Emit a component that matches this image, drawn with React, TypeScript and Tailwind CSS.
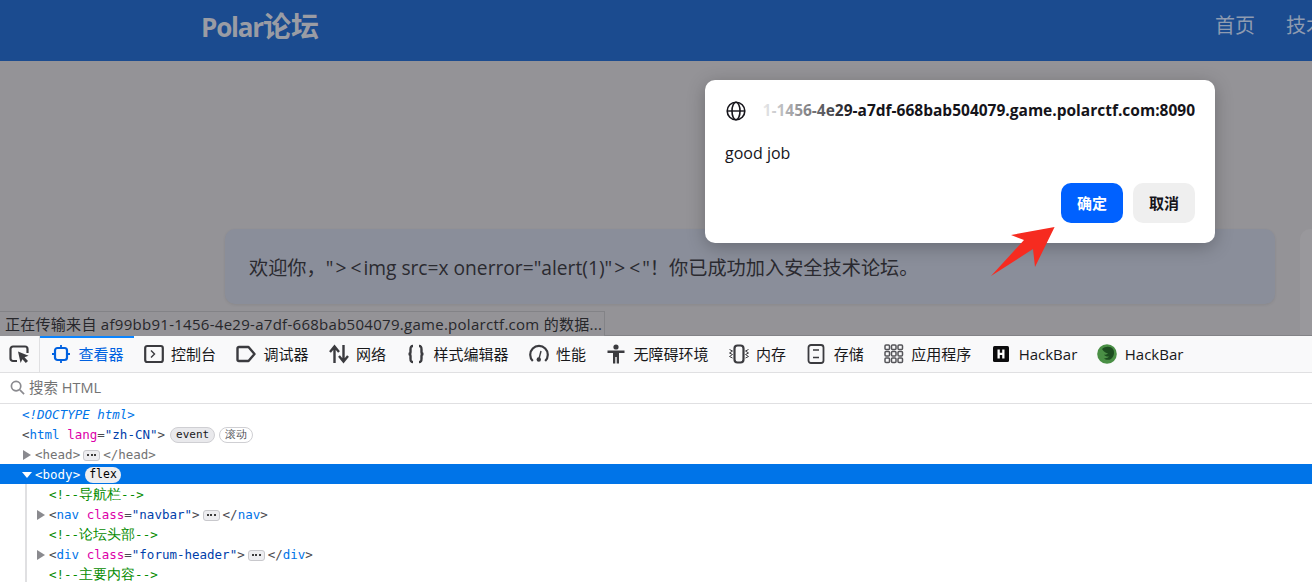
import type { ReactNode } from "react";

const MONO = "font-['DejaVu_Sans_Mono',monospace]";

function InspectIcon() {
  return (
    <svg width="20" height="20" viewBox="0 0 20 20" fill="none">
      <path d="M8 17H4a2.500 2.500 0 0 1-2.500-2.500V5A2.500 2.500 0 0 1 4 2.500h12A2.500 2.500 0 0 1 18.500 5v4" stroke="#3b3b3f" strokeWidth="2.200" />
      <path d="M9 7.500l10.500 4.200-4 1.600 3.500 3.800-2.200 2-3.400-3.800-1.800 3.600z" fill="#3b3b3f" />
    </svg>
  );
}

function InspectorIcon() {
  return (
    <svg width="20" height="20" viewBox="0 0 20 20" fill="none" stroke="#0061e0" strokeWidth="2.200">
      <rect x="4" y="4" width="12" height="12" rx="2.500" />
      <path d="M10 1v3M10 16v3M1 10h3M16 10h3" strokeWidth="1.800" />
    </svg>
  );
}

function ConsoleIcon() {
  return (
    <svg width="20" height="20" viewBox="0 0 20 20" fill="none" stroke="#3b3b3f">
      <rect x="1.200" y="2" width="17.600" height="16" rx="2" strokeWidth="2.200" />
      <path d="M7 6.500l3.500 3.500L7 13.500" strokeWidth="1.400" />
    </svg>
  );
}

function DebuggerIcon() {
  return (
    <svg width="20" height="20" viewBox="0 0 20 20" fill="none">
      <path d="M3 3h9.500l6 7-6 7H3a1.500 1.500 0 0 1-1.500-1.500v-11A1.500 1.500 0 0 1 3 3z" stroke="#3b3b3f" strokeWidth="2.400" strokeLinejoin="round" />
    </svg>
  );
}

function NetworkIcon() {
  return (
    <svg width="20" height="20" viewBox="0 0 20 20" fill="none" stroke="#3b3b3f" strokeWidth="2.400">
      <path d="M5.500 19V3M1 8l4.500-5.500L10 8" />
      <path d="M14.500 1v16M10 12l4.500 5.500L19 12" />
    </svg>
  );
}

function BracesIcon() {
  return (
    <svg width="20" height="20" viewBox="0 0 20 20" fill="none" stroke="#3b3b3f" strokeWidth="2.400">
      <path d="M7 2C4.500 2 4.500 3.500 4.500 5.500v2.500c0 1-.6 2-2 2 1.400 0 2 1 2 2v2.500c0 2 0 3.500 2.500 3.500" />
      <path d="M13 2c2.500 0 2.500 1.500 2.500 3.500v2.500c0 1 .6 2 2 2-1.400 0-2 1-2 2v2.500c0 2 0 3.500-2.500 3.500" />
    </svg>
  );
}

function GaugeIcon() {
  return (
    <svg width="20" height="20" viewBox="0 0 20 20" fill="none" stroke="#3b3b3f" strokeWidth="2.200">
      <path d="M3.800 17A8.800 8.800 0 1 1 16.200 17" />
      <path d="M12 7l-1.800 7" strokeWidth="1.400" />
      <circle cx="9.800" cy="15.500" r="2.200" fill="#3b3b3f" stroke="none" />
    </svg>
  );
}

function PersonIcon() {
  return (
    <svg width="20" height="20" viewBox="0 0 20 20" fill="#3b3b3f">
      <circle cx="10" cy="3" r="2.600" />
      <path d="M1.500 6.500h17v2.500h-5.500v10.500h-2.300V13H9.300v6.500H7V9H1.500z" />
    </svg>
  );
}

function MemoryIcon() {
  return (
    <svg width="20" height="20" viewBox="0 0 20 20" fill="none" stroke="#3b3b3f">
      <rect x="5.500" y="1.500" width="9" height="17" rx="3" strokeWidth="2.200" />
      <path d="M.5 5.500L3.500 7 .5 9 3.500 10.500 .5 12.500 3.500 14M19.500 5.500L16.500 7l3 2-3 1.500 3 2-3 1.500" strokeWidth="1" />
    </svg>
  );
}

function StorageIcon() {
  return (
    <svg width="20" height="20" viewBox="0 0 20 20" fill="none" stroke="#3b3b3f">
      <rect x="2.500" y="1" width="15" height="18" rx="2.500" strokeWidth="1.800" />
      <path d="M7 6h6M7 13.500h6M2.500 9.800" strokeWidth="1.400" />
    </svg>
  );
}

function AppsIcon() {
  const cells = [1, 7.500, 14];
  return (
    <svg width="20" height="20" viewBox="0 0 20 20" fill="none" stroke="#55555a" strokeWidth="1.500">
      {cells.map((y) => cells.map((x) => <rect key={`${x}-${y}`} x={x} y={y} width="4.500" height="4.500" rx="1" />))}
    </svg>
  );
}

function HackBarIcon() {
  return (
    <svg width="20" height="20" viewBox="0 0 20 20">
      <rect x="2" y="2" width="16" height="16" rx="1.500" fill="#0c0c0d" />
      <path d="M6.500 5.500h2.300v3.300h2.400V5.500h2.300v9h-2.300v-3.500H8.800v3.500H6.500z" fill="#fff" />
    </svg>
  );
}

function GreenBarIcon() {
  return (
    <svg width="20" height="20" viewBox="0 0 20 20">
      <circle cx="10" cy="10" r="9.800" fill="#4a8f45" />
      <path d="M5 5c3-3 9-3 11 0 2 3 1 8-2 10-2 1.500-6 1-7-1 2 .6 4 0 5-1.500-2 .4-4-.4-5-2 2 .5 3 0 4-1-2-.5-4-1.500-6-4.500z" fill="#1d4d20" />
    </svg>
  );
}

function Tab({ icon, label, active }: { icon: ReactNode; label: string; active?: boolean }) {
  return (
    <div className={`flex h-full items-center gap-[7.500px] pr-[10px] ${active ? "border-t-2 border-[#0a84ff] pb-[2px] pl-[11px] text-[#0061e0]" : "pl-[10px] text-[#18181a]"}`}>
      <span className="flex w-5 shrink-0 items-center justify-center">{icon}</span>
      <span className="whitespace-nowrap">{label}</span>
    </div>
  );
}

function Row({ children, indent, selected }: { children: ReactNode; indent: string; selected?: boolean }) {
  return (
    <div className={`flex h-5 items-center whitespace-pre pt-[2px] ${indent} ${selected ? "bg-[#0074e8] text-white" : ""}`}>
      {children}
    </div>
  );
}

function Twisty({ open, white }: { open?: boolean; white?: boolean }) {
  return (
    <svg width="10" height="10" viewBox="0 0 10 10" className="mr-[3px] shrink-0">
      {open ? (
        <path d="M0 2h10L5 8z" fill={white ? "#fff" : "#8a8a8f"} />
      ) : (
        <path d="M1 0l8 5-8 5z" fill="#8a8a8f" />
      )}
    </svg>
  );
}

function Dots() {
  return (
    <span className="mx-[3px] flex h-[11px] w-[17px] items-center justify-center gap-[1.500px] rounded-[3px] border border-[#c8c8cc] bg-[#ededf0]">
      <i className="size-[2px] rounded-full bg-black" />
      <i className="size-[2px] rounded-full bg-black" />
      <i className="size-[2px] rounded-full bg-black" />
    </span>
  );
}

function Badge({ children, light }: { children: ReactNode; light?: boolean }) {
  return (
    <span className={`flex h-[16px] items-center rounded-full border px-[5px] text-[11px] ${light ? "border-[#cfcfd3] bg-white text-[#55555a]" : "border-[#cfcfd3] bg-[#e9e9ec] text-[#18181a]"}`}>
      {children}
    </span>
  );
}

const Punct = ({ children }: { children: ReactNode }) => <span className="text-[#4a4a4f]">{children}</span>;
const Tag = ({ children }: { children: ReactNode }) => <span className="text-[#0074e8]">{children}</span>;
const Attr = ({ children }: { children: ReactNode }) => <span className="text-[#dd00a9]">{children}</span>;
const Val = ({ children }: { children: ReactNode }) => <span className="text-[#003eaa]">{children}</span>;
const Comment = ({ text }: { text: string }) => (
  <span className="text-[#058b00]">
    &lt;!--<span className="text-[14px] leading-none">{text}</span>--&gt;
  </span>
);

export default function App() {
  return (
    <div className="relative flex h-[582px] w-[1312px] flex-col overflow-hidden bg-white font-['Open_Sans','Noto_Sans_CJK_SC',sans-serif]">
      {/* page behind the alert */}
      <div className="flex h-[336px] shrink-0 flex-col overflow-hidden border-b border-[#838387] bg-[#949397]">
        <nav className="flex h-[61px] shrink-0 items-center overflow-hidden bg-[#1b4b8f] pb-[9px] pl-[201px]">
          <span className="w-[117px] shrink-0 whitespace-nowrap text-[28px] font-bold text-[#9a9ca4]">
            <span className="text-[26px] tracking-[-1.200px]">Polar</span>论坛
          </span>
          <span className="ml-[897px] shrink-0 whitespace-nowrap text-[20px] text-[#8f9bb0]">首页</span>
          <span className="ml-[31px] shrink-0 whitespace-nowrap text-[20px] text-[#8f9bb0]">技术</span>
        </nav>
        <div className="mt-[168px] flex">
          <div className="ml-[225px] flex h-[75px] w-[1050px] shrink-0 items-center whitespace-pre rounded-[10px] bg-[#8a8e9a] pl-[24px] pt-[3px] text-[19.200px] text-[#2a2a30] shadow-[0_1px_3px_rgba(0,0,0,0.08)]">
            欢迎你，"<span className="mx-[2px]">&gt;</span><span className="mx-[2px]">&lt;</span>img src=x onerror="alert(1)"<span className="mx-[2px]">&gt;</span><span className="mx-[2px]">&lt;</span>"！你已成功加入安全技术论坛。
          </div>
          <div className="ml-[25px] h-[120px] w-[40px] shrink-0 rounded-[10px] bg-[#99989c]" />
        </div>
      </div>

      {/* loading status */}
      <div className="absolute left-0 top-[311px] flex h-[25px] w-[605px] items-center border-r border-t border-[#838387] bg-[#949397] pl-[5px] text-[15px] tracking-[0.28px] whitespace-nowrap text-[#27272b]">
        正在传输来自 af99bb91-1456-4e29-a7df-668bab504079.game.polarctf.com 的数据...
      </div>

      {/* alert dialog */}
      <div className="absolute left-[705px] top-[80px] flex h-[163px] w-[510px] flex-col rounded-[10px] bg-white px-[20px] shadow-[0_4px_18px_rgba(0,0,0,0.25)]">
        <div className="mt-[20px] flex h-[22px] items-center">
          <svg width="20" height="20" viewBox="0 0 20 20" fill="none" stroke="#15141a" strokeWidth="1.600" className="ml-[1px] shrink-0">
            <circle cx="10" cy="10" r="8.800" />
            <ellipse cx="10" cy="10" rx="4" ry="8.800" />
            <path d="M1.500 10h17" strokeWidth="1.400" />
          </svg>
          <div className="relative ml-[8px] flex min-w-0 flex-1 justify-end overflow-hidden">
            <span className="whitespace-nowrap text-[15.500px] font-bold text-[#15141a]">
              1-1456-4e29-a7df-668bab504079.game.polarctf.com:8090
            </span>
            <div className="absolute inset-y-0 left-0 w-[100px] bg-gradient-to-r from-white to-transparent" />
          </div>
        </div>
        <div className="mt-[20px] text-[16px] leading-[22px] text-[#15141a]">good job</div>
        <div className="mt-[19px] flex justify-end gap-[10px]">
          <button className="h-10 w-[62px] rounded-[10px] bg-[#0061ff] text-[15px] font-bold text-white">确定</button>
          <button className="h-10 w-[62px] rounded-[10px] bg-[#efefef] text-[15px] font-bold text-[#15141a]">取消</button>
        </div>
      </div>

      {/* red annotation arrow */}
      <svg className="absolute left-[985px] top-[222px]" width="75" height="60" viewBox="985 222 75 60">
        <polygon points="1054.600,227 1011,235 1024,240 991,276 1033,249 1035,267" fill="#f62b20" />
      </svg>

      {/* devtools toolbar */}
      <div className="flex h-[37px] shrink-0 items-center border-b border-[#e0e0e2] bg-[#f9f9fa] text-[15px]">
        <div className="flex h-full w-[40px] shrink-0 items-center justify-center border-r border-[#e0e0e2] pr-[1px]">
          <span className="h-[20px]"><InspectIcon /></span>
        </div>
        <Tab icon={<InspectorIcon />} label="查看器" active />
        <Tab icon={<ConsoleIcon />} label="控制台" />
        <Tab icon={<DebuggerIcon />} label="调试器" />
        <Tab icon={<NetworkIcon />} label="网络" />
        <Tab icon={<BracesIcon />} label="样式编辑器" />
        <Tab icon={<GaugeIcon />} label="性能" />
        <Tab icon={<PersonIcon />} label="无障碍环境" />
        <Tab icon={<MemoryIcon />} label="内存" />
        <Tab icon={<StorageIcon />} label="存储" />
        <Tab icon={<AppsIcon />} label="应用程序" />
        <Tab icon={<HackBarIcon />} label="HackBar" />
        <Tab icon={<GreenBarIcon />} label="HackBar" />
      </div>

      {/* search */}
      <div className="flex h-[31px] shrink-0 items-center gap-[4px] border-b border-[#e0e0e2] pb-[1px] pl-[10px] text-[14.500px] text-[#737373]">
        <svg width="15" height="15" viewBox="0 0 16 16" fill="none" stroke="#8a8a8f" strokeWidth="1.800">
          <circle cx="6.500" cy="6.500" r="5" />
          <path d="M10.500 10.500L15 15" />
        </svg>
        搜索 HTML
      </div>

      {/* markup tree */}
      <div className={`relative flex-1 text-[12.500px] ${MONO}`}>
        <div className="absolute bottom-0 left-[25px] top-[80px] w-[2px] bg-[#e0e0e2]" />
        <Row indent="pl-[22px]"><span className="italic text-[#0074e8]">&lt;!DOCTYPE html&gt;</span></Row>
        <Row indent="pl-[22px]">
          <span><Punct>&lt;</Punct><Tag>html</Tag> <Attr>lang</Attr><Punct>=</Punct><Val>"zh-CN"</Val><Punct>&gt;</Punct></span>
          <span className="ml-[5px] flex gap-[4px]"><Badge>event</Badge><Badge light>滚动</Badge></span>
        </Row>
        <Row indent="pl-[22px]">
          <Twisty />
          <span className="text-[#737373]">&lt;head&gt;</span><Dots /><span className="text-[#737373]">&lt;/head&gt;</span>
        </Row>
        <Row indent="pl-[22px]" selected>
          <Twisty open white />
          &lt;body&gt;
          <span className="ml-[5px] flex h-[16px] items-center rounded-full bg-[#eeeef0] px-[4px] text-[11.500px] text-black">flex</span>
        </Row>
        <Row indent="pl-[49px]"><Comment text="导航栏" /></Row>
        <Row indent="pl-[36px]">
          <Twisty />
          <span><Punct>&lt;</Punct><Tag>nav</Tag> <Attr>class</Attr><Punct>=</Punct><Val>"navbar"</Val><Punct>&gt;</Punct></span><Dots /><span><Punct>&lt;/</Punct><Tag>nav</Tag><Punct>&gt;</Punct></span>
        </Row>
        <Row indent="pl-[49px]"><Comment text="论坛头部" /></Row>
        <Row indent="pl-[36px]">
          <Twisty />
          <span><Punct>&lt;</Punct><Tag>div</Tag> <Attr>class</Attr><Punct>=</Punct><Val>"forum-header"</Val><Punct>&gt;</Punct></span><Dots /><span><Punct>&lt;/</Punct><Tag>div</Tag><Punct>&gt;</Punct></span>
        </Row>
        <Row indent="pl-[49px]"><Comment text="主要内容" /></Row>
      </div>
    </div>
  );
}
